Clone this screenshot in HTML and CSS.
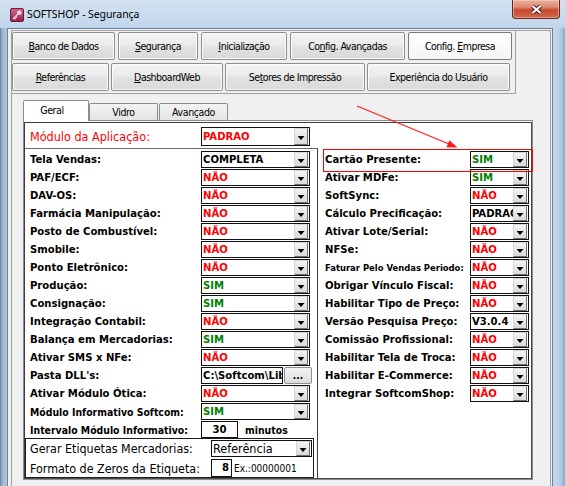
FILE: index.html
```html
<!DOCTYPE html>
<html lang="pt-BR">
<head>
<meta charset="utf-8">
<title>SOFTSHOP - Segurança</title>
<link rel="stylesheet" href="styles.css">
</head>
<body>
<div class="window">
  <div class="titlebar">
    <svg class="app-icon" width="14" height="14" viewBox="0 0 14 14">
      <defs>
        <linearGradient id="ig" x1="0" y1="0" x2="0" y2="1">
          <stop offset="0" stop-color="#d2688e"/>
          <stop offset="1" stop-color="#8e2348"/>
        </linearGradient>
      </defs>
      <rect x="0.5" y="0.5" width="13" height="13" rx="1.5" fill="url(#ig)" stroke="#6e1a38"/>
      <circle cx="9.3" cy="4.7" r="2.3" fill="#f7d3df"/>
      <path d="M8 6 L3 11 M4.2 9.8 L5.6 11.2 M5.6 8.4 L6.8 9.6" stroke="#f7d3df" stroke-width="1.4" fill="none"/>
    </svg>
    <span class="title">SOFTSHOP - Segurança</span>
    <div class="close-btn">
      <svg width="13" height="11" viewBox="0 0 13 11">
        <path d="M2.5 2 L10.5 9 M10.5 2 L2.5 9" stroke="#4d1b12" stroke-width="4"/>
        <path d="M2.5 2 L10.5 9 M10.5 2 L2.5 9" stroke="#ffffff" stroke-width="2.2"/>
      </svg>
    </div>
  </div>
  <div class="chrome">
    <div class="frame-left"></div>
    <div class="client">
      <div class="pagectl">
        <div class="topnav">
          <div class="navrow">
            <div class="navbtn nb-1"><span><u>B</u>anco de Dados</span></div>
            <div class="navbtn nb-2"><span><u>S</u>egurança</span></div>
            <div class="navbtn nb-3"><span><u>I</u>nicialização</span></div>
            <div class="navbtn nb-4"><span>Co<u>n</u>fig. Avançadas</span></div>
            <div class="navbtn nb-5 active"><span>Config. <u>E</u>mpresa</span></div>
          </div>
          <div class="navrow r2">
            <div class="navbtn nb-6"><span><u>R</u>eferências</span></div>
            <div class="navbtn nb-7"><span><u>D</u>ashboardWeb</span></div>
            <div class="navbtn nb-8"><span>Se<u>t</u>ores de Impressão</span></div>
            <div class="navbtn nb-9"><span>Experiência do Usuário</span></div>
          </div>
        </div>
        <div class="inner">
          <div class="tabs">
            <div class="tab t-geral current">Geral</div>
            <div class="tab t-vidro">Vidro</div>
            <div class="tab t-avanc">Avançado</div>
          </div>
          <div class="sheet">
            <div class="panel">
              <div class="modrow">
                <span class="mod-label">Módulo da Aplicação:</span>
                <div class="sel w-l tall"><span class="val red">PADRAO</span><span class="dd"></span></div>
              </div>
              <div class="cols">
                <div class="col-left">
                  <div class="row"><span class="lbl">Tela Vendas:</span><div class="sel w-l"><span class="val">COMPLETA</span><span class="dd"></span></div></div>
                  <div class="row"><span class="lbl">PAF/ECF:</span><div class="sel w-l"><span class="val red">NÃO</span><span class="dd"></span></div></div>
                  <div class="row"><span class="lbl">DAV-OS:</span><div class="sel w-l"><span class="val red">NÃO</span><span class="dd"></span></div></div>
                  <div class="row"><span class="lbl">Farmácia Manipulação:</span><div class="sel w-l"><span class="val red">NÃO</span><span class="dd"></span></div></div>
                  <div class="row"><span class="lbl">Posto de Combustível:</span><div class="sel w-l"><span class="val red">NÃO</span><span class="dd"></span></div></div>
                  <div class="row"><span class="lbl">Smobile:</span><div class="sel w-l"><span class="val red">NÃO</span><span class="dd"></span></div></div>
                  <div class="row"><span class="lbl">Ponto Eletrônico:</span><div class="sel w-l"><span class="val red">NÃO</span><span class="dd"></span></div></div>
                  <div class="row"><span class="lbl">Produção:</span><div class="sel w-l"><span class="val green">SIM</span><span class="dd"></span></div></div>
                  <div class="row"><span class="lbl">Consignação:</span><div class="sel w-l"><span class="val green">SIM</span><span class="dd"></span></div></div>
                  <div class="row"><span class="lbl">Integração Contabil:</span><div class="sel w-l"><span class="val red">NÃO</span><span class="dd"></span></div></div>
                  <div class="row"><span class="lbl">Balança em Mercadorias:</span><div class="sel w-l"><span class="val green">SIM</span><span class="dd"></span></div></div>
                  <div class="row"><span class="lbl">Ativar SMS x NFe:</span><div class="sel w-l"><span class="val red">NÃO</span><span class="dd"></span></div></div>
                  <div class="row"><span class="lbl">Pasta DLL's:</span><div class="txtbox">C:\Softcom\Lib</div><div class="dots">...</div></div>
                  <div class="row"><span class="lbl">Ativar Módulo Ótica:</span><div class="sel w-l"><span class="val red">NÃO</span><span class="dd"></span></div></div>
                  <div class="row"><span class="lbl sm">Módulo Informativo Softcom:</span><div class="sel w-l"><span class="val green">SIM</span><span class="dd"></span></div></div>
                  <div class="row last"><span class="lbl sm">Intervalo Módulo Informativo:</span><div class="numbox">30</div><span class="unit">minutos</span></div>
                  <div class="etiq">
                    <div class="erow"><span class="elbl">Gerar Etiquetas Mercadorias:</span><div class="sel w-e"><span class="val reg">Referência</span><span class="dd"></span></div></div>
                    <div class="erow e2"><span class="elbl">Formato de Zeros da Etiqueta:</span><div class="zbox">8</div><span class="ex">Ex.:00000001</span></div>
                  </div>
                </div>
                <div class="col-right">
                  <div class="row"><span class="lbl">Cartão Presente:</span><div class="sel w-r"><span class="val green">SIM</span><span class="dd"></span></div></div>
                  <div class="row"><span class="lbl">Ativar MDFe:</span><div class="sel w-r"><span class="val green">SIM</span><span class="dd"></span></div></div>
                  <div class="row"><span class="lbl">SoftSync:</span><div class="sel w-r"><span class="val red">NÃO</span><span class="dd"></span></div></div>
                  <div class="row"><span class="lbl">Cálculo Precificação:</span><div class="sel w-r"><span class="val">PADRAO</span><span class="dd"></span></div></div>
                  <div class="row"><span class="lbl">Ativar Lote/Serial:</span><div class="sel w-r"><span class="val red">NÃO</span><span class="dd"></span></div></div>
                  <div class="row"><span class="lbl">NFSe:</span><div class="sel w-r"><span class="val red">NÃO</span><span class="dd"></span></div></div>
                  <div class="row"><span class="lbl xs">Faturar Pelo Vendas Periodo:</span><div class="sel w-r"><span class="val red">NÃO</span><span class="dd"></span></div></div>
                  <div class="row"><span class="lbl">Obrigar Vínculo Fiscal:</span><div class="sel w-r"><span class="val red">NÃO</span><span class="dd"></span></div></div>
                  <div class="row"><span class="lbl">Habilitar Tipo de Preço:</span><div class="sel w-r"><span class="val red">NÃO</span><span class="dd"></span></div></div>
                  <div class="row"><span class="lbl">Versão Pesquisa Preço:</span><div class="sel w-r"><span class="val">V3.0.4</span><span class="dd"></span></div></div>
                  <div class="row"><span class="lbl">Comissão Profissional:</span><div class="sel w-r"><span class="val red">NÃO</span><span class="dd"></span></div></div>
                  <div class="row"><span class="lbl">Habilitar Tela de Troca:</span><div class="sel w-r"><span class="val red">NÃO</span><span class="dd"></span></div></div>
                  <div class="row"><span class="lbl">Habilitar E-Commerce:</span><div class="sel w-r"><span class="val red">NÃO</span><span class="dd"></span></div></div>
                  <div class="row"><span class="lbl">Integrar SoftcomShop:</span><div class="sel w-r"><span class="val red">NÃO</span><span class="dd"></span></div></div>
                </div>
              </div>
            </div>
          </div>
        </div>
      </div>
    </div>
    <div class="frame-right"></div>
  </div>
  <div class="annot-box"></div>
  <svg class="annot-arrow" width="565" height="486" viewBox="0 0 565 486">
    <line x1="357" y1="106" x2="449" y2="144" stroke="#ff1a1a" stroke-width="1.1"/>
    <polygon points="457.5,147.5 446.4,147.2 449.4,140.2" fill="#ff1a1a"/>
  </svg>
</div>
</body>
</html>
```

FILE: styles.css
```css
* { box-sizing: border-box; }
html, body { margin: 0; padding: 0; }
body {
  width: 565px;
  height: 486px;
  overflow: hidden;
  font-family: "DejaVu Sans Condensed", "DejaVu Sans", sans-serif;
  font-stretch: condensed;
  color: #000;
  background: #bcd1e8;
}
.window {
  position: relative;
  width: 565px;
  height: 486px;
  display: flex;
  flex-direction: column;
  overflow: hidden;
  background: linear-gradient(180deg, #d3e2f2 0, #c1d5eb 28px, #b4cbe5 100%);
}
.titlebar {
  height: 28px;
  flex: none;
  display: flex;
  align-items: flex-start;
  padding-left: 10px;
}
.app-icon { margin-top: 8px; flex: none; }
.title {
  margin: 6px 0 0 3px;
  font-family: "Noto Sans", "DejaVu Sans", sans-serif;
  font-stretch: normal;
  font-size: 10.5px;
  letter-spacing: -0.1px;
  line-height: 16px;
  color: #000;
}
.close-btn {
  margin-left: auto;
  margin-right: 5px;
  width: 48px;
  height: 19px;
  flex: none;
  border: 1px solid #652a1e;
  border-top: 0;
  border-radius: 0 0 4px 4px;
  background: linear-gradient(180deg, #eab1a2 0, #dc8873 40%, #c54a30 55%, #d2694c 100%);
  box-shadow: inset 0 0 0 1px rgba(255, 210, 200, 0.5);
  display: flex;
  align-items: center;
  justify-content: center;
}
.chrome { flex: 1; display: flex; min-height: 0; }
.frame-left {
  width: 7px;
  flex: none;
  background: linear-gradient(90deg, #6f7e92 0, #98b1cd 2px, #b2c9e3 100%);
}
.frame-right {
  flex: 1;
  background: linear-gradient(90deg, #c6d8ec 0, #b7cde6 60%, #8fa6c0 100%);
}
.client {
  width: 546px;
  flex: none;
  border: 1px solid #6a7d95;
  border-bottom: 0;
  background: #f0f0f0;
  padding: 1px 1px 0 3px;
}
.pagectl {
  height: 100%;
  border: 1px solid #a0a0a0;
  border-bottom: 0;
}
.topnav {
  width: 504px;
  border-right: 1px solid #a0a0a0;
  border-bottom: 1px solid #a0a0a0;
  padding: 1px 0 2px;
  display: flex;
  flex-direction: column;
  gap: 3px;
}
.navrow { display: flex; gap: 3px; height: 28px; }
.navrow.r2 { gap: 2px; }
.navbtn {
  height: 28px;
  flex: none;
  display: flex;
  align-items: center;
  justify-content: center;
  border: 1px solid #8e8e8e;
  border-radius: 2px;
  background: linear-gradient(180deg, #f4f4f4 0, #ebebeb 45%, #e1e1e1 55%, #dadada 100%);
  box-shadow: inset 0 0 0 1px #fbfbfb;
  font-size: 10.5px;
  letter-spacing: -0.5px;
  white-space: nowrap;
}
.navbtn.active {
  background: linear-gradient(180deg, #ffffff, #f5f5f5);
  border-color: #7a7a7a;
}
.nb-1 { width: 103px; }
.nb-2 { width: 80px; }
.nb-3 { width: 86px; }
.nb-4 { width: 115px; }
.nb-5 { width: 104px; }
.nb-6 { width: 97px; }
.nb-7 { width: 112px; }
.nb-8 { width: 140px; }
.nb-9 { width: 143px; }

.inner { padding: 6px 0 0 11px; }
.tabs {
  display: flex;
  align-items: flex-end;
  height: 20px;
  position: relative;
  z-index: 1;
}
.tab {
  height: 17px;
  flex: none;
  border: 1px solid #898c95;
  border-bottom: 0;
  border-radius: 2px 2px 0 0;
  background: linear-gradient(180deg, #f3f3f3, #e4e4e4);
  font-size: 10.5px;
  letter-spacing: -0.4px;
  display: flex;
  align-items: center;
  justify-content: center;
}
.tab.current {
  height: 21px;
  margin-bottom: -1px;
  background: #fff;
  padding: 0 8px 2px 0;
}
.t-geral { width: 66px; }
.t-vidro { width: 69px; }
.t-avanc { width: 69px; margin-left: 1px; }

.sheet {
  width: 510px;
  height: 360px;
  border: 1px solid #898c95;
  background: #fff;
  padding-top: 1px;
}
.panel {
  height: 100%;
  border: 1px solid;
  border-color: #3c3c3c #4a4a4a #4a4a4a #3c3c3c;
  display: flex;
  flex-direction: column;
}
.modrow {
  height: 25px;
  flex: none;
  display: flex;
  align-items: flex-start;
}
.mod-label {
  width: 176px;
  flex: none;
  padding-left: 5px;
  margin-top: 4px;
  line-height: 19px;
  font-size: 12.5px;
  color: #ff0000;
  white-space: nowrap;
}
.cols { flex: 1; display: flex; min-height: 0; }
.col-left {
  width: 293px;
  flex: none;
  border-top: 1px solid #6a6a6a;
  border-right: 1px solid #3c3c3c;
  padding-top: 2px;
}
.col-right {
  flex: 1;
  padding-top: 3px;
}
.row {
  display: flex;
  align-items: center;
  height: 17px;
  margin-bottom: 1px;
}
.row.last { margin-bottom: 0; }
.lbl {
  flex: none;
  white-space: nowrap;
  overflow: hidden;
  font-weight: bold;
  font-size: 11.2px;
}
.col-left .lbl { width: 176px; padding-left: 5px; }
.col-right .lbl { width: 152px; padding-left: 7px; }
.lbl.sm { font-size: 10.4px; }
.lbl.xs { font-size: 9.4px; }

.sel {
  display: flex;
  flex: none;
  height: 17px;
  border: 1px solid #101010;
  background: #fff;
}
.sel.tall { height: 19px; margin-top: 4px; }
.w-l { width: 109px; }
.w-r { width: 59px; }
.w-e { width: 101px; }
.val {
  flex: 1;
  min-width: 0;
  overflow: hidden;
  white-space: nowrap;
  padding-left: 1px;
  font-weight: bold;
  font-size: 11.2px;
  line-height: 15px;
}
.sel.tall .val { line-height: 17px; }
.val.red { color: #ff0000; }
.val.green { color: #008000; }
.val.reg { font-weight: normal; font-size: 12.5px; }
.dd {
  width: 14px;
  flex: none;
  margin-right: 1px;
  border: 1px solid;
  border-color: #d6d6d6 #707070 #707070 #d6d6d6;
  background: linear-gradient(180deg, #f4f4f4, #dadada);
  display: flex;
  align-items: center;
  justify-content: center;
  padding-top: 3px;
}
.dd::after {
  content: "";
  width: 7px;
  height: 4px;
  background: #000;
  clip-path: polygon(0 0, 100% 0, 50% 100%);
}
.txtbox {
  width: 82px;
  height: 17px;
  flex: none;
  border: 1px solid #101010;
  padding-left: 1px;
  font-weight: bold;
  font-size: 11.2px;
  line-height: 15px;
  overflow: hidden;
  white-space: nowrap;
}
.dots {
  width: 28px;
  height: 17px;
  flex: none;
  margin-left: 1px;
  border: 1px solid #8e8e8e;
  border-radius: 2px;
  background: linear-gradient(180deg, #f4f4f4, #dddddd);
  font-weight: bold;
  font-size: 10px;
  display: flex;
  align-items: center;
  justify-content: center;
}
.numbox {
  width: 37px;
  height: 17px;
  flex: none;
  border: 1px solid #101010;
  text-align: center;
  font-weight: bold;
  font-size: 11.2px;
  line-height: 15px;
}
.unit {
  margin-left: 7px;
  font-weight: bold;
  font-size: 10.4px;
  white-space: nowrap;
}
.etiq {
  width: 289px;
  height: 40px;
  border: 1px solid #1e1e1e;
  padding: 1px 0 0 4px;
}
.erow {
  display: flex;
  align-items: center;
  height: 17px;
}
.erow.e2 { margin-top: 2px; height: 18px; }
.elbl {
  width: 181px;
  flex: none;
  font-size: 12.4px;
  white-space: nowrap;
  overflow: hidden;
}
.zbox {
  width: 21px;
  height: 18px;
  flex: none;
  border: 1px solid #101010;
  text-align: right;
  padding-right: 2px;
  font-weight: bold;
  font-size: 11.2px;
  line-height: 16px;
}
.ex {
  margin-left: 2px;
  font-size: 10px;
  white-space: nowrap;
}
.annot-box {
  position: absolute;
  left: 323px;
  top: 149px;
  width: 210px;
  height: 23px;
  border: 1px solid #ff0000;
  pointer-events: none;
}
.annot-arrow {
  position: absolute;
  left: 0;
  top: 0;
  pointer-events: none;
}
```
